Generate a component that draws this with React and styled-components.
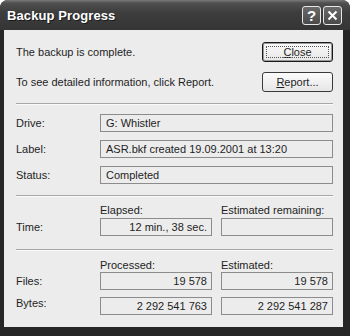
import React from "react";
import styled, { createGlobalStyle } from "styled-components";

const GlobalStyle = createGlobalStyle`
  html, body {
    margin: 0;
    padding: 0;
    background: #ffffff;
  }
  body {
    font-family: "Liberation Sans", Arial, sans-serif;
  }
`;

// Window frame

const Window = styled.div`
  width: 350px;
  height: 336px;
  box-sizing: border-box;
  display: flex;
  flex-direction: column;
  background: #262626;
  border-radius: 8px 8px 0 0;
  overflow: hidden;
`;

const TitleBar = styled.div`
  height: 30px;
  flex: none;
  display: flex;
  align-items: center;
  padding: 0 8px 0 7px;
  background: linear-gradient(#7a7a7a 0, #505050 3px, #3e3e3e 40%, #353535 100%);
`;

const Title = styled.div`
  flex: 1;
  color: #ffffff;
  font-weight: 700;
  font-size: 13px;
  letter-spacing: 0.1px;
  text-shadow: 1px 1px 0 #1a1a1a;
`;

const CaptionButton = styled.div`
  width: 19px;
  height: 19px;
  margin-left: 2px;
  box-sizing: border-box;
  border: 1px solid #e8e8e8;
  border-radius: 3px;
  background: linear-gradient(#6a6a6a, #4a4a4a);
  display: flex;
  align-items: center;
  justify-content: center;
  color: #ffffff;
  font-size: 15px;
  font-weight: 700;
`;

// Client area

const Body = styled.div`
  flex: 1;
  margin: 0 7px 9px 4px;
  padding: 12px 10px 0 12px;
  background: #ececec;
  display: flex;
  flex-direction: column;
  color: #1e1e1e;
  font-size: 11px;
`;

const MessageRow = styled.div`
  display: flex;
  align-items: center;
  justify-content: space-between;
  margin-bottom: ${(p) => p.$gap || 0}px;
`;

const Button = styled.div`
  width: 71px;
  height: 20px;
  box-sizing: border-box;
  border: 1px solid ${(p) => (p.$default ? "#1a1a1a" : "#3a3a3a")};
  border-radius: 3px;
  background: linear-gradient(#fbfbfb, #e6e6e6);
  display: flex;
  align-items: center;
  justify-content: center;
  font-size: 11px;
  position: relative;
  box-shadow: ${(p) => (p.$default ? "inset 0 0 0 1px #9a9a9a" : "none")};

  ${(p) =>
    p.$default &&
    `
    &::after {
      content: "";
      position: absolute;
      inset: 3px;
      border: 1px dotted #555;
    }
  `}

  u {
    text-decoration: underline;
  }
`;

const Separator = styled.div`
  height: 1px;
  background: #a8a8a8;
  border-bottom: 1px solid #fafafa;
  margin: ${(p) => p.$top}px 0 ${(p) => p.$bottom}px 0;
`;

const InfoGrid = styled.div`
  display: grid;
  grid-template-columns: 84px 1fr;
  row-gap: 8px;
  align-items: center;
`;

const StatGrid = styled.div`
  display: grid;
  grid-template-columns: 75px 112px 112px;
  column-gap: 9px;
  align-items: center;
`;

const ColumnHead = styled.div`
  height: 13px;
  line-height: 13px;
  margin-bottom: ${(p) => p.$gap || 0}px;
`;

const Label = styled.div`
  line-height: 18px;
`;

const Field = styled.div`
  height: 18px;
  box-sizing: border-box;
  border: 1px solid #8c8c8c;
  background: #ececec;
  padding: 0 4px 0 5px;
  line-height: 16px;
  text-align: ${(p) => (p.$right ? "right" : "left")};
  white-space: nowrap;
  margin-top: ${(p) => p.$top || 0}px;
`;

export default function App() {
  return (
    <>
      <GlobalStyle />
      <Window>
        <TitleBar>
          <Title>Backup Progress</Title>
          <CaptionButton>?</CaptionButton>
          <CaptionButton>
            <svg width="11" height="11" viewBox="0 0 11 11">
              <path d="M1.5 1.5 L9.5 9.5 M9.5 1.5 L1.5 9.5" stroke="#fff" strokeWidth="2" />
            </svg>
          </CaptionButton>
        </TitleBar>
        <Body>
          <MessageRow $gap={10}>
            <span>The backup is complete.</span>
            <Button $default>
              <span>
                <u>C</u>lose
              </span>
            </Button>
          </MessageRow>
          <MessageRow>
            <span>To see detailed information, click Report.</span>
            <Button>
              <span>
                <u>R</u>eport...
              </span>
            </Button>
          </MessageRow>

          <Separator $top={11} $bottom={9} />

          <InfoGrid>
            <Label>Drive:</Label>
            <Field>G: Whistler</Field>
            <Label>Label:</Label>
            <Field>ASR.bkf created 19.09.2001 at 13:20</Field>
            <Label>Status:</Label>
            <Field>Completed</Field>
          </InfoGrid>

          <Separator $top={11} $bottom={7} />

          <StatGrid>
            <span />
            <ColumnHead $gap={1}>Elapsed:</ColumnHead>
            <ColumnHead $gap={1}>Estimated remaining:</ColumnHead>
            <Label>Time:</Label>
            <Field $right>12 min., 38 sec.</Field>
            <Field $right />
          </StatGrid>

          <Separator $top={13} $bottom={8} />

          <StatGrid>
            <span />
            <ColumnHead>Processed:</ColumnHead>
            <ColumnHead>Estimated:</ColumnHead>
            <Label>Files:</Label>
            <Field $right>19 578</Field>
            <Field $right>19 578</Field>
            <Label>Bytes:</Label>
            <Field $right $top={7}>2 292 541 763</Field>
            <Field $right $top={7}>2 292 541 287</Field>
          </StatGrid>
        </Body>
      </Window>
    </>
  );
}
